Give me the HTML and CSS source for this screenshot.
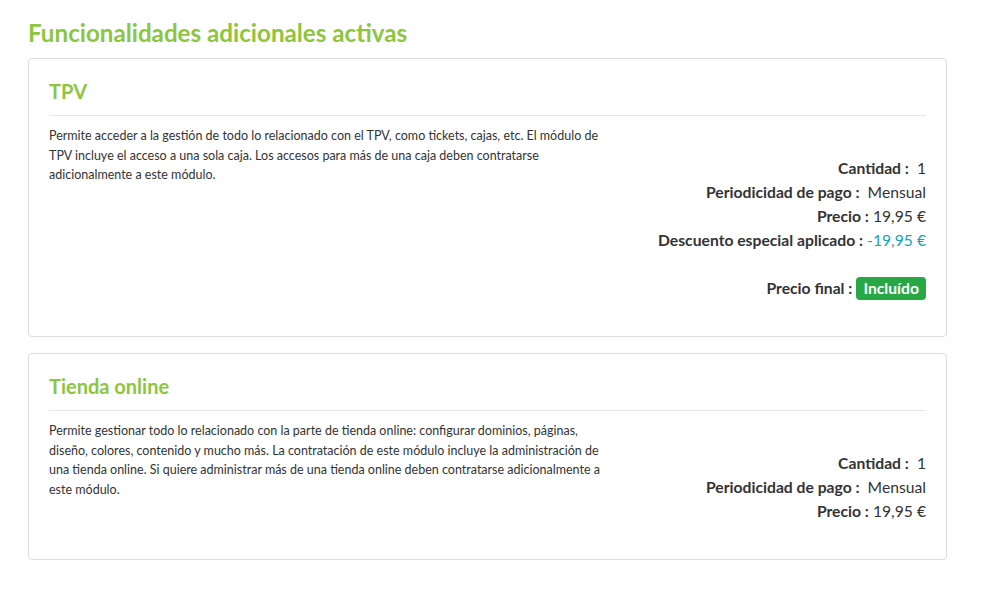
FILE: index.html
```html
<!DOCTYPE html>
<html lang="es">
<head>
<meta charset="utf-8">
<title>Funcionalidades adicionales activas</title>
<link rel="stylesheet" href="styles.css">
</head>
<body>
<div class="page">
  <h2 class="page-title">Funcionalidades adicionales activas</h2>

  <div class="card">
    <div class="card-header">
      <h3 class="card-title">TPV</h3>
    </div>
    <div class="card-body">
      <p class="desc">Permite acceder a la gestión de todo lo relacionado con el TPV, como tickets, cajas, etc. El módulo de TPV incluye el acceso a una sola caja. Los accesos para más de una caja deben contratarse adicionalmente a este módulo.</p>
      <div class="summary">
        <div class="line"><span class="label">Cantidad :</span>&nbsp; 1</div>
        <div class="line"><span class="label">Periodicidad de pago :</span>&nbsp; Mensual</div>
        <div class="line"><span class="label">Precio :</span> 19,95 €</div>
        <div class="line"><span class="label">Descuento especial aplicado :</span> <span class="discount">-19,95 €</span></div>
        <div class="line final"><span class="label">Precio final :</span> <span class="badge">Incluído</span></div>
      </div>
    </div>
  </div>

  <div class="card">
    <div class="card-header">
      <h3 class="card-title">Tienda online</h3>
    </div>
    <div class="card-body">
      <p class="desc">Permite gestionar todo lo relacionado con la parte de tienda online: configurar dominios, páginas, diseño, colores, contenido y mucho más. La contratación de este módulo incluye la administración de una tienda online. Si quiere administrar más de una tienda online deben contratarse adicionalmente a este módulo.</p>
      <div class="summary">
        <div class="line"><span class="label">Cantidad :</span>&nbsp; 1</div>
        <div class="line"><span class="label">Periodicidad de pago :</span>&nbsp; Mensual</div>
        <div class="line"><span class="label">Precio :</span> 19,95 €</div>
      </div>
    </div>
  </div>
</div>
</body>
</html>
```

FILE: styles.css
```css
* { box-sizing: border-box; }

body {
  margin: 0;
  background: #ffffff;
  font-family: Lato, "Open Sans", sans-serif;
  color: #333333;
}

.page {
  padding: 18px 53px 0 28px;
}

.page-title {
  margin: 0 0 10px;
  font-size: 24.2px;
  line-height: 30px;
  font-weight: 700;
  color: #8cc63f;
}

.card {
  border: 1px solid #dddddd;
  border-radius: 4px;
  padding: 20px 20px 36px;
  margin-bottom: 16px;
}

.card-header {
  border-bottom: 1px solid #e6e6e6;
  padding-bottom: 12px;
}

.card-title {
  margin: 0;
  font-size: 20px;
  line-height: 24px;
  font-weight: 700;
  color: #8cc63f;
}

.card-body {
  display: grid;
  grid-template-columns: 565px 1fr;
  column-gap: 40px;
  padding-top: 10px;
}

.desc {
  margin: 0;
  font-size: 12.5px;
  line-height: 19.5px;
  color: #333333;
}

.summary {
  padding-top: 30px;
  text-align: right;
  font-size: 15.7px;
  line-height: 24px;
  white-space: nowrap;
}

.label {
  font-weight: 700;
}

.discount {
  color: #17a2b8;
}

.final {
  margin-top: 24px;
}

.badge {
  display: inline-block;
  background: #28a745;
  color: #ffffff;
  font-weight: 700;
  padding: 0 7px;
  line-height: 23px;
  border-radius: 4px;
}
```
